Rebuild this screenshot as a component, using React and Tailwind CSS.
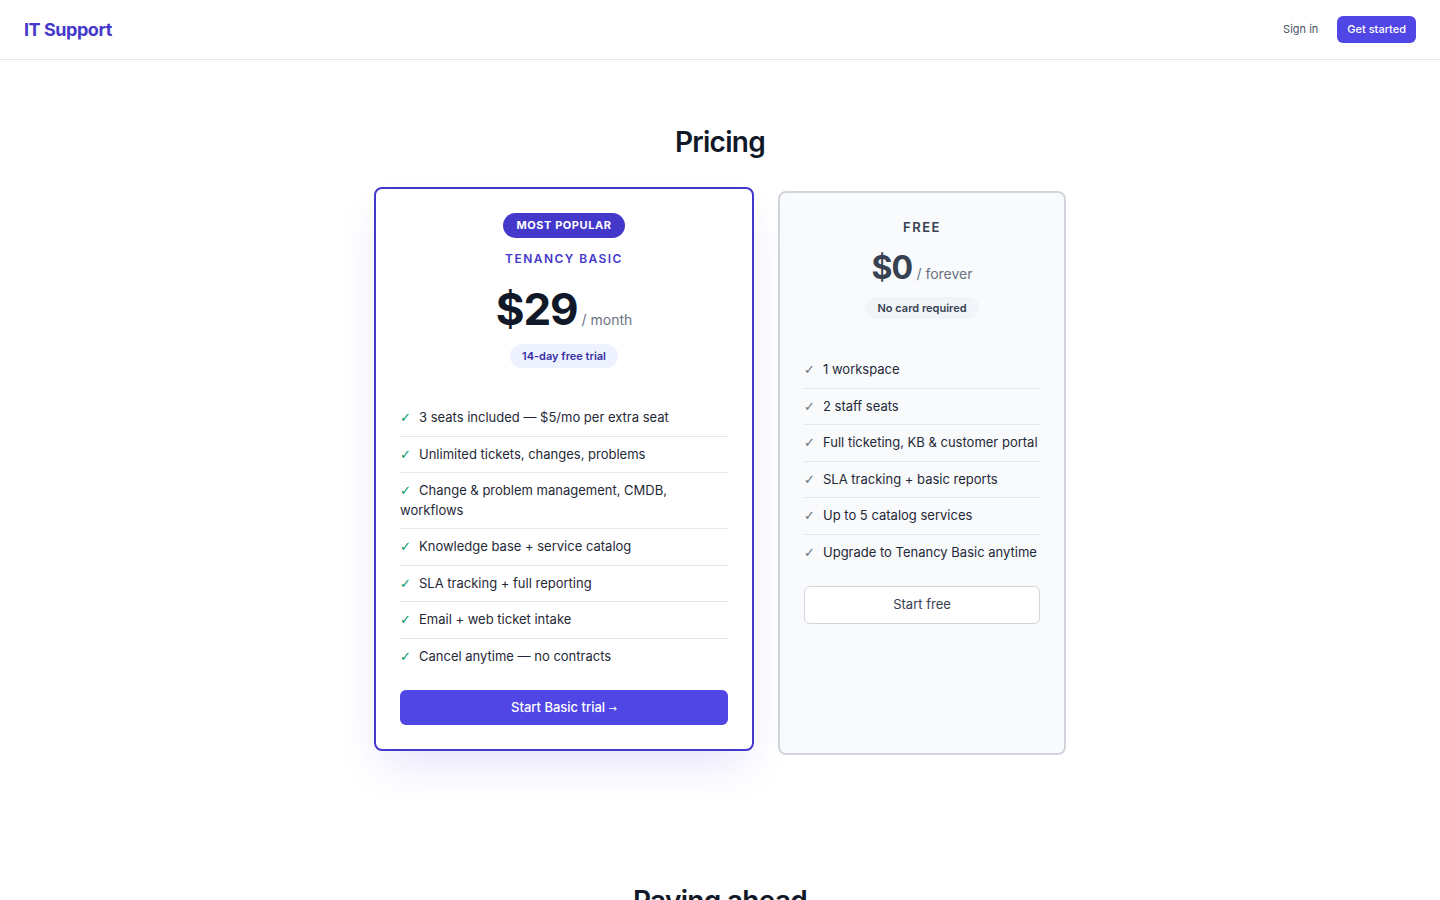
import { useState } from 'react';

const basicFeatures = [
  '3 seats included — $5/mo per extra seat',
  'Unlimited tickets, changes, problems',
  'Change & problem management, CMDB, workflows',
  'Knowledge base + service catalog',
  'SLA tracking + full reporting',
  'Email + web ticket intake',
  'Cancel anytime — no contracts',
];

const freeFeatures = [
  '1 workspace',
  '2 staff seats',
  'Full ticketing, KB & customer portal',
  'SLA tracking + basic reports',
  'Up to 5 catalog services',
  'Upgrade to Tenancy Basic anytime',
];

const FeatureList = ({ items, checkClass }) => (
  <ul className="mb-4">
    {items.map((item, i) => (
      <li
        key={i}
        className={`py-2 text-[13px] leading-[19.5px] text-[#1f2937] ${i < items.length - 1 ? 'border-b border-[#e5e7eb]' : ''}`}
      >
        <span className={`inline-block w-[19px] leading-none font-['DejaVu_Sans',sans-serif] text-[13px] ${checkClass}`}>✓</span>
        {item}
      </li>
    ))}
  </ul>
);

export default function App() {
  const [hover, setHover] = useState(null);

  return (
    <div className="min-h-screen bg-white font-['Inter',sans-serif] text-[#111827]">
      <header className="h-[60px] border-b border-[#e5e7eb] flex items-center justify-between px-6">
        <a className="text-lg font-bold text-[#4338ca] tracking-tight">IT Support</a>
        <nav className="flex items-center gap-[19px]">
          <a className="text-[11px] text-[#4b5563]">Sign in</a>
          <button className="h-[27px] px-2.5 rounded-md bg-[#4f46e5] text-white text-[11px] font-medium">
            Get started
          </button>
        </nav>
      </header>

      <main className="pt-16">
        <h2 className="text-[28px] leading-9 font-semibold text-center text-[#111827] mb-[31px] tracking-tight">Pricing</h2>

        <div className="flex justify-center items-start gap-6">
          {/* Basic plan */}
          <div
            className="w-[380px] -translate-y-1 bg-white border-2 border-[#4338ca] rounded-lg p-6 shadow-[0_20px_40px_-8px_rgba(79,70,229,0.15)]"
            onMouseEnter={() => setHover('basic')}
            onMouseLeave={() => setHover(null)}
          >
            <div className="flex flex-col items-center">
              <span className="h-[25px] px-3.5 flex items-center rounded-full bg-[#4338ca] text-white text-[11px] font-bold tracking-wider">
                MOST POPULAR
              </span>
              <div className="mt-[11px] text-[12px] leading-5 font-semibold tracking-[0.12em] text-[#4338ca]">
                TENANCY BASIC
              </div>
              <div className="mt-4 flex items-baseline gap-1">
                <span className="text-[44px] leading-[48px] font-bold text-[#111827] tracking-tight">$29</span>
                <span className="text-sm text-[#6b7280]">/ month</span>
              </div>
              <span className="mt-[11px] h-6 px-3 flex items-center rounded-full bg-[#eef2ff] text-[11px] font-semibold text-[#3730a3]">
                14-day free trial
              </span>
            </div>

            <div className="mt-8">
              <FeatureList items={basicFeatures} checkClass="text-[#059669]" />
            </div>

            <button
              className={`w-full h-[35px] rounded-md text-white text-[13px] font-medium ${hover === 'basic' ? 'bg-[#4338ca]' : 'bg-[#4f46e5]'}`}
            >
              Start Basic trial <span className="font-['DejaVu_Sans',sans-serif] text-[10px] font-normal leading-none">→</span>
            </button>
          </div>

          {/* Free plan */}
          <div className="w-[288px] self-stretch bg-[#f8fafc] border-2 border-[#d1d5db] rounded-lg p-6">
            <div className="flex flex-col items-center">
              <div className="text-[13px] leading-5 font-semibold tracking-[0.12em] text-[#374151]">FREE</div>
              <div className="mt-[13px] flex items-baseline gap-1">
                <span className="text-[32px] leading-9 font-bold text-[#374151] tracking-tight">$0</span>
                <span className="text-sm text-[#6b7280]">/ forever</span>
              </div>
              <span className="mt-[11px] h-[22px] px-3 flex items-center rounded-full bg-[#f1f5f9] text-[11px] font-semibold text-[#374151]">
                No card required
              </span>
            </div>

            <div className="mt-[33px]">
              <FeatureList items={freeFeatures} checkClass="text-[#6b7280]" />
            </div>

            <button className="w-full h-[38px] rounded-md bg-white border border-[#d1d5db] text-[#374151] text-[13px]">
              Start free
            </button>
          </div>
        </div>

        <section className="pt-[128px] pb-16">
          <h2 className="text-[28px] leading-9 font-semibold text-center text-[#111827] tracking-tight">Paying ahead</h2>
        </section>
      </main>
    </div>
  );
}
